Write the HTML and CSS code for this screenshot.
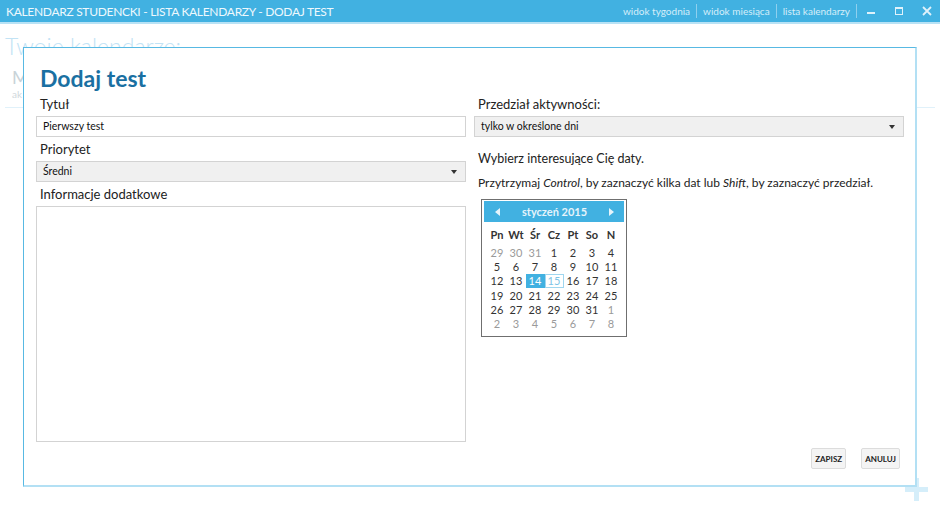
FILE: index.html
```html
<!DOCTYPE html>
<html lang="pl">
<head>
<meta charset="utf-8">
<title>Dodaj test</title>
<link rel="stylesheet" href="styles.css">
</head>
<body>
<header class="titlebar">
  <div class="app-title">KALENDARZ STUDENCKI - LISTA KALENDARZY - DODAJ TEST</div>
  <nav class="nav">
    <span class="nav-link">widok tygodnia</span>
    <span class="nav-sep"></span>
    <span class="nav-link">widok miesiąca</span>
    <span class="nav-sep"></span>
    <span class="nav-link">lista kalendarzy</span>
    <span class="nav-sep"></span>
  </nav>
  <div class="winbtns">
    <svg class="winbtn" width="10" height="10" viewBox="0 0 10 10"><rect x="1" y="6" width="8" height="2" fill="currentColor"/></svg>
    <svg class="winbtn" width="10" height="10" viewBox="0 0 10 10"><rect x="1.5" y="1.5" width="7" height="7" fill="none" stroke="currentColor"/><rect x="1" y="1" width="8" height="2" fill="currentColor"/></svg>
    <svg class="winbtn" width="10" height="10" viewBox="0 0 10 10"><path d="M1 1 L9 9 M9 1 L1 9" stroke="currentColor" stroke-width="1.8"/></svg>
  </div>
</header>

<main class="page">
  <h1 class="page-title">Twoie kalendarze:</h1>
  <div class="cal-item">
    <div class="cal-name">M</div>
    <div class="cal-sub">ak</div>
  </div>
  <div class="page-rule"></div>
</main>

<div class="plus"></div>

<section class="dialog">
  <h2 class="dialog-title">Dodaj test</h2>
  <div class="cols">
    <div class="col">
      <label class="label">Tytuł</label>
      <div class="input">Pierwszy test</div>
      <label class="label">Priorytet</label>
      <div class="select"><span>Średni</span><span class="caret"></span></div>
      <label class="label">Informacje dodatkowe</label>
      <div class="textarea"></div>
    </div>
    <div class="col">
      <label class="label">Przedział aktywności:</label>
      <div class="select"><span>tylko w określone dni</span><span class="caret"></span></div>
      <p class="hint hint-first">Wybierz interesujące Cię daty.</p>
      <p class="hint">Przytrzymaj <em>Control</em>, by zaznaczyć kilka dat lub <em>Shift</em>, by zaznaczyć przedział.</p>
      <div class="calendar">
        <div class="cal-head">
          <span class="arrow arrow-left"></span>
          <span class="month">styczeń 2015</span>
          <span class="arrow arrow-right"></span>
        </div>
        <div class="grid">
          <span class="dn">Pn</span><span class="dn">Wt</span><span class="dn">Śr</span><span class="dn">Cz</span><span class="dn">Pt</span><span class="dn">So</span><span class="dn">N</span>
          <span class="d out">29</span><span class="d out">30</span><span class="d out">31</span><span class="d">1</span><span class="d">2</span><span class="d">3</span><span class="d">4</span>
          <span class="d">5</span><span class="d">6</span><span class="d">7</span><span class="d">8</span><span class="d">9</span><span class="d">10</span><span class="d">11</span>
          <span class="d">12</span><span class="d">13</span><span class="d sel">14</span><span class="d today">15</span><span class="d">16</span><span class="d">17</span><span class="d">18</span>
          <span class="d">19</span><span class="d">20</span><span class="d">21</span><span class="d">22</span><span class="d">23</span><span class="d">24</span><span class="d">25</span>
          <span class="d">26</span><span class="d">27</span><span class="d">28</span><span class="d">29</span><span class="d">30</span><span class="d">31</span><span class="d out">1</span>
          <span class="d out">2</span><span class="d out">3</span><span class="d out">4</span><span class="d out">5</span><span class="d out">6</span><span class="d out">7</span><span class="d out">8</span>
        </div>
      </div>
    </div>
  </div>
  <div class="actions">
    <button class="btn">ZAPISZ</button>
    <button class="btn">ANULUJ</button>
  </div>
</section>
</body>
</html>
```

FILE: styles.css
```css
* { box-sizing: border-box; }
html, body {
  margin: 0;
  padding: 0;
  width: 940px;
  height: 509px;
  overflow: hidden;
  background: #fff;
  font-family: "Lato", "Open Sans", sans-serif;
  color: #222;
  position: relative;
}

.titlebar {
  height: 24px;
  background: #41b1e1;
  border-bottom: 2px solid #b8e2f5;
  display: flex;
  align-items: center;
  color: #eef8fd;
}
.app-title {
  padding-left: 6px;
  font-size: 12px;
  letter-spacing: -0.3px;
  flex: 1;
  white-space: nowrap;
}
.nav {
  display: flex;
  align-items: center;
  font-size: 10px;
  color: #d5eef9;
}
.nav-link { padding: 0 6px; }
.nav-sep {
  width: 1px;
  height: 14px;
  background: #8fd0ee;
}
.winbtns {
  display: flex;
  align-items: center;
  gap: 18px;
  padding: 0 8px 0 9px;
  color: #dff2fb;
}
.winbtn { display: block; }

.page { padding: 8px 5px 0 5px; }
.page-title {
  margin: 0;
  font-weight: 300;
  font-size: 23px;
  line-height: 28px;
  color: #c2e3f5;
}
.cal-item { padding: 6px 0 0 7px; }
.cal-name { font-size: 18px; line-height: 22px; color: #c9d3d8; }
.cal-sub { font-size: 10px; line-height: 12px; color: #d0d8dc; }
.page-rule {
  margin-top: 7px;
  height: 1px;
  background: #e0f1fa;
}

.plus {
  position: absolute;
  left: 905px;
  top: 478px;
  width: 23px;
  height: 23px;
  background:
    linear-gradient(#d5eefa, #d5eefa) center / 23px 5px no-repeat,
    linear-gradient(#d5eefa, #d5eefa) center / 5px 23px no-repeat;
}

.dialog {
  position: absolute;
  left: 23px;
  top: 47px;
  width: 894px;
  height: 440px;
  background: #fff;
  border-top: 1px solid #58b9e3;
  border-left: 1px solid #58b9e3;
  border-right: 2px solid #b3e0f4;
  border-bottom: 2px solid #b3e0f4;
  padding: 0 11px 0 12px;
  display: flex;
  flex-direction: column;
}
.dialog-title {
  margin: 15px 0 0 4px;
  font-size: 23px;
  line-height: 30px;
  font-weight: 700;
  color: #1a70a2;
}
.cols {
  display: flex;
  gap: 8px;
  margin-top: 3px;
}
.col {
  width: 430px;
  display: flex;
  flex-direction: column;
}
.label {
  display: block;
  padding-left: 4px;
  font-size: 13px;
  line-height: 16px;
  color: #222;
  margin-bottom: 4px;
}
.input, .select {
  height: 21px;
  border: 1px solid #d3d3d3;
  font-size: 10.5px;
  line-height: 19px;
  padding: 0 6px;
  color: #111;
  margin-bottom: 4px;
}
.select {
  background: #f0f0f0;
  display: flex;
  justify-content: space-between;
  align-items: center;
  padding-right: 8px;
}
.caret {
  width: 0;
  height: 0;
  border-left: 3px solid transparent;
  border-right: 3px solid transparent;
  border-top: 4px solid #333;
}
.textarea {
  height: 236px;
  border: 1px solid #d3d3d3;
}

.hint {
  margin: 0;
  padding-left: 4px;
  font-size: 12px;
  line-height: 17px;
  color: #222;
  white-space: nowrap;
}
.hint-first { margin-top: 9px; margin-bottom: 7px; font-size: 12.5px; }
.hint em { font-style: italic; }

.calendar {
  margin: 8px 0 0 7px;
  width: 146px;
  height: 138px;
  border: 1px solid #6f6f6f;
  padding: 1px 2px;
}
.cal-head {
  height: 21px;
  background: #41b1e1;
  display: flex;
  align-items: center;
  justify-content: space-between;
  padding: 0 10px 0 11px;
}
.month {
  font-size: 11px;
  font-weight: 700;
  color: #e6f4fb;
}
.arrow {
  width: 0;
  height: 0;
  border-top: 4px solid transparent;
  border-bottom: 4px solid transparent;
}
.arrow-left { border-right: 5px solid #e6f4fb; }
.arrow-right { border-left: 5px solid #e6f4fb; }

.grid {
  display: grid;
  grid-template-columns: repeat(7, 19px);
  grid-template-rows: 20px repeat(6, 14.3px);
  justify-content: center;
  margin-top: 3px;
  font-size: 11px;
  text-align: center;
}
.grid span {
  display: flex;
  align-items: center;
  justify-content: center;
  line-height: 1;
}
.grid .dn {
  font-weight: 700;
  color: #333;
  height: 18px;
  align-self: start;
}
.d { color: #333; }
.d.out { color: #9a9a9a; }
.d.sel { background: #41b1e1; color: #fff; }
.d.today { border: 1px solid #9fd6ef; color: #7fc4e6; }

.actions {
  margin-top: auto;
  margin-bottom: 16px;
  display: flex;
  justify-content: flex-end;
  gap: 15px;
  padding-right: 4px;
}
.btn {
  height: 21px;
  padding: 0 3px;
  background: #f4f4f4;
  border: 1px solid #dcdcdc;
  border-radius: 2px;
  font-family: "Lato", "Open Sans", sans-serif;
  font-size: 8px;
  font-weight: 700;
  color: #222;
}
```
